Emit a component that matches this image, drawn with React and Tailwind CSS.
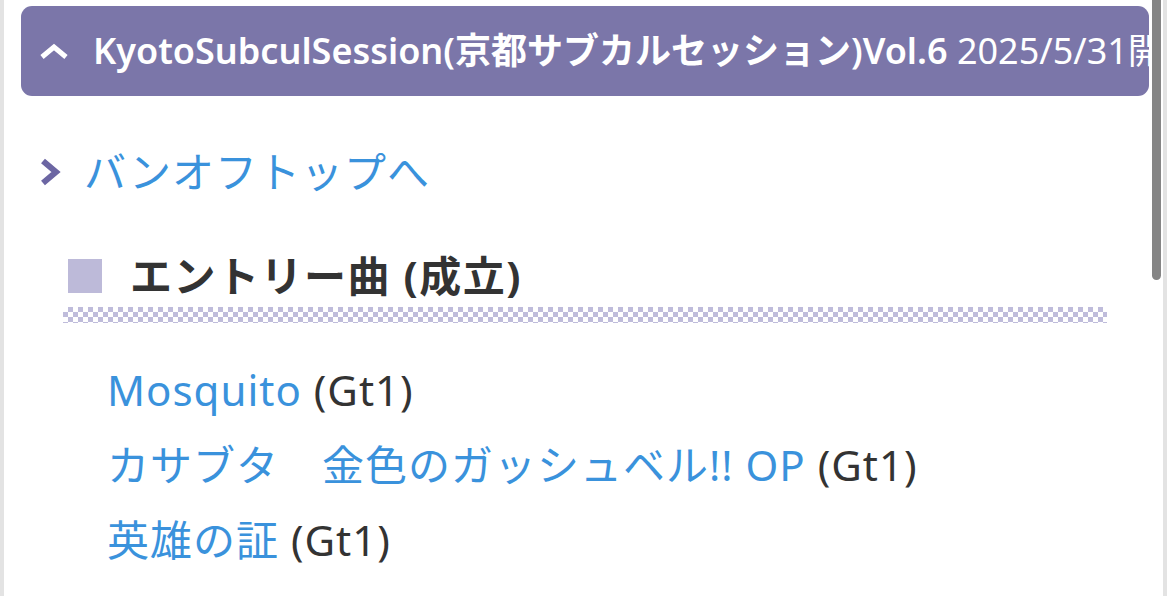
import React from "react";

const font = { fontFamily: '"Noto Sans", "Open Sans", "Noto Sans CJK JP", sans-serif' };

const songs = [
  { title: "Mosquito", part: "(Gt1)" },
  { title: "カサブタ　金色のガッシュベル!! OP", part: "(Gt1)" },
  { title: "英雄の証", part: "(Gt1)" },
];

function ChevronUp() {
  return (
    <svg width="30" height="18" viewBox="0 0 30 18" className="shrink-0">
      <polyline points="3,15 15,5 27,15" fill="none" stroke="#ffffff" strokeWidth="5" strokeLinejoin="miter" />
    </svg>
  );
}

function ChevronRight() {
  return (
    <svg width="24" height="28" viewBox="0 0 24 28" className="shrink-0">
      <polyline points="5,3 18,14 5,25" fill="none" stroke="#6c66a3" strokeWidth="6" strokeLinejoin="miter" />
    </svg>
  );
}

export default function App() {
  return (
    <div className="flex h-[596px] w-[1169px] overflow-hidden bg-white" style={font}>
      {/* left frame line */}
      <div className="w-[4px] shrink-0 bg-[#e3e3e3]" />

      <div className="flex min-w-0 flex-1 flex-col pr-[3px]">
        {/* accordion header */}
        <div className="ml-[17px] mt-[6px] flex h-[90px] items-center overflow-hidden rounded-[11px] bg-[#7b76a9] pl-[18px] text-white">
          <ChevronUp />
          <div className="ml-[24px] whitespace-nowrap text-[36px] leading-none">
            <span className="font-semibold">KyotoSubculSession(京都サブカルセッション)Vol.6</span>
            <span> 2025/5/31開催</span>
          </div>
        </div>

        {/* back link */}
        <div className="ml-[34px] mt-[48px] flex h-[56px] items-center">
          <ChevronRight />
          <a className="ml-[22px] text-[42px] leading-none tracking-[1px] text-[#3a92dc]">バンオフトップへ</a>
        </div>

        {/* section heading */}
        <div className="ml-[64px] mt-[48px] flex h-[56px] items-center">
          <div className="h-[34px] w-[34px] shrink-0 bg-[#bdbad9]" />
          <h2 className="ml-[28px] text-[42px] font-bold leading-none tracking-[1.5px] text-[#333333]">エントリー曲 (成立)</h2>
        </div>
        <div className="ml-[59px] mt-[3px] h-[16px] w-[1044px] bg-[repeating-conic-gradient(#bfbcdb_0_25%,#ffffff_0_50%)] bg-[length:10px_10px]" />

        {/* songs */}
        <ul className="ml-[103px] mt-[29px] flex flex-col">
          {songs.map((s) => (
            <li key={s.title} className="whitespace-nowrap text-[42px] leading-[75px] tracking-[1px]">
              <a className="text-[#3a92dc]">{s.title}</a>
              <span className="text-[#333333]"> {s.part}</span>
            </li>
          ))}
        </ul>
      </div>

      {/* scrollbar track */}
      <div className="flex w-[11px] shrink-0 flex-col">
        <div className="h-[280px] w-[9px] rounded-b-[5px] bg-[#858585]" />
      </div>
      {/* right frame line */}
      <div className="w-[4px] shrink-0 bg-[#e3e3e3]" />
      <div className="w-[2px] shrink-0" />
    </div>
  );
}
